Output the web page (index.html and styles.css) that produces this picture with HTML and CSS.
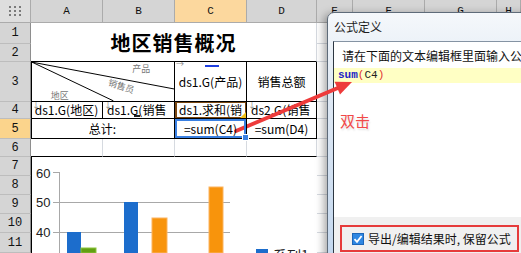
FILE: index.html
```html
<!DOCTYPE html>
<html lang="zh-CN">
<head>
  <meta charset="UTF-8" />
  <title>公式定义</title>
  <meta name="viewport" content="width=device-width, initial-scale=1" />
  <link rel="stylesheet" href="styles.css">
</head>
<body>
<div class="page">
  <div class="sheet">
    <div class="hd corner">
      <svg width="12" height="10" viewBox="0 0 12 10">
        <g fill="#7a7a7a">
          <rect x="0" y="0" width="2" height="2"/><rect x="5" y="0" width="2" height="2"/><rect x="10" y="0" width="2" height="2"/>
          <rect x="0" y="4" width="2" height="2"/><rect x="5" y="4" width="2" height="2"/><rect x="10" y="4" width="2" height="2"/>
          <rect x="0" y="8" width="2" height="2"/><rect x="5" y="8" width="2" height="2"/><rect x="10" y="8" width="2" height="2"/>
        </g>
      </svg>
    </div>
    <div class="hd col">A</div>
    <div class="hd col">B</div>
    <div class="hd col on">C</div>
    <div class="hd col">D</div>
    <div class="hd col">E</div>
    <div class="hd col">F</div>
    <div class="hd col">G</div>
    <div class="hd col">H</div>

    <div class="title">地区销售概况</div>
    <div class="chart">
      <svg width="286" height="96" viewBox="31 157 286 96">
        <line x1="31.5" y1="157" x2="31.5" y2="253" stroke="#000"/>
        <g font-family="Liberation Sans, Arial, sans-serif" font-size="13" fill="#222">
          <text x="36" y="178">60</text>
          <text x="36" y="207">50</text>
          <text x="36" y="237">40</text>
        </g>
        <g stroke="#a8a8a8">
          <line x1="53" y1="172.5" x2="59" y2="172.5"/>
          <line x1="53" y1="202.5" x2="230" y2="202.5"/>
          <line x1="53" y1="232.5" x2="230" y2="232.5"/>
          <line x1="59.5" y1="172" x2="59.5" y2="253"/>
        </g>
        <rect x="67" y="232" width="14" height="21" fill="#1c6dcc"/>
        <rect x="81" y="248" width="15" height="5" fill="#62a012" stroke="#8cc33c" stroke-width="1"/>
        <rect x="124" y="202" width="14" height="51" fill="#1c6dcc"/>
        <rect x="152" y="218" width="15" height="35" fill="#f8940c" stroke="#fbb460" stroke-width="1"/>
        <rect x="209" y="187" width="14" height="66" fill="#f8940c" stroke="#fbb460" stroke-width="1"/>
        <rect x="256" y="249" width="12" height="10" fill="#1c6dcc"/>
        <text x="273" y="261" font-family="Noto Sans CJK SC, sans-serif" font-size="14" fill="#222">系列1</text>
      </svg>
    </div>

    <div class="hd row">1</div>
    <div class="c"></div><div class="c"></div><div class="c"></div><div class="c"></div>
    <div class="hd row">2</div>
    <div class="c"></div><div class="c"></div><div class="c"></div><div class="c"></div>

    <div class="hd row">3</div>
    <div class="t first diag">
      <svg width="143" height="39" viewBox="0 0 143 39">
        <line x1="0" y1="0" x2="143" y2="27" stroke="#000"/>
        <line x1="0" y1="0" x2="82" y2="39" stroke="#000"/>
        <g font-family="Noto Sans CJK SC, sans-serif" font-size="9" fill="#777">
          <text x="101" y="10">产品</text>
          <text x="76" y="27" transform="rotate(18 88 25)">销售员</text>
          <text x="19" y="37">地区</text>
        </g>
      </svg>
    </div>
    <div class="t c3">ds1.G(产品)</div>
    <div class="t">销售总额</div>
    <div class="c"></div><div class="c"></div><div class="c"></div><div class="c"></div>

    <div class="hd row">4</div>
    <div class="t first down">ds1.G(地区)</div>
    <div class="t down left cur">ds1.G(销售</div>
    <div class="t left c4">ds1.求和(销</div>
    <div class="t down left">ds2.G(销售</div>
    <div class="c"></div><div class="c"></div><div class="c"></div><div class="c"></div>

    <div class="hd row on">5</div>
    <div class="t first span2">总计:</div>
    <div class="t c5">=sum(C4)</div>
    <div class="t">=sum(D4)</div>
    <div class="c"></div><div class="c"></div><div class="c"></div><div class="c"></div>

    <div class="hd row">6</div>
    <div class="c edge"></div><div class="c edge"></div><div class="c edge"></div><div class="c edge"></div>
    <div class="c"></div><div class="c"></div><div class="c"></div><div class="c"></div>

    <div class="hd row">7</div>
    <div class="c"></div><div class="c"></div><div class="c"></div><div class="c"></div>
    <div class="hd row">8</div>
    <div class="c"></div><div class="c"></div><div class="c"></div><div class="c"></div>
    <div class="hd row">9</div>
    <div class="c"></div><div class="c"></div><div class="c"></div><div class="c"></div>
    <div class="hd row">10</div>
    <div class="c"></div><div class="c"></div><div class="c"></div><div class="c"></div>
    <div class="hd row">11</div>
    <div class="c"></div><div class="c"></div><div class="c"></div><div class="c"></div>
  </div>

  <div class="dlg">
    <div class="dlg-title">公式定义</div>
    <div class="dlg-body">
      <div class="prompt">请在下面的文本编辑框里面输入公式</div>
      <div class="editor">
        <div class="line"><span class="fn">sum</span><span class="par">(</span>C4<span class="par">)</span></div>
      </div>
      <div class="foot">
        <label class="keep">
          <svg class="chk" width="12" height="12" viewBox="0 0 12 12">
            <rect x="0.5" y="0.5" width="11" height="11" fill="#2f87e2" stroke="#1d66b8"/>
            <path d="M2.5 6.2 L5 8.8 L9.6 3" fill="none" stroke="#fff" stroke-width="1.8"/>
          </svg>
          导出/编辑结果时, 保留公式
        </label>
      </div>
    </div>
  </div>

  <div class="note">双击</div>

  <svg class="arrow" width="521" height="253" viewBox="0 0 521 253">
    <line x1="236" y1="131" x2="339" y2="87.5" stroke="#ee3b3b" stroke-width="4" stroke-linecap="round"/>
    <polygon points="352,82 334.6,81.8 340,94.6" fill="#ee3b3b"/>
  </svg>
</div>
</body>
</html>
```

FILE: styles.css
```css
*{box-sizing:border-box;}
body{margin:0;background:#fff;font-family:"Noto Sans CJK SC","Noto Sans",sans-serif;}
.page{position:relative;width:521px;height:253px;overflow:hidden;background:#fff;}

.sheet{
  display:grid;
  grid-template-columns:31px 72px 72px 72px 70px 36px 72px 72px 24px;
  grid-template-rows:23px 21px 18px 40px 17px 20px 18px 19px 19px 19px 19px 20px;
}
.hd{
  display:flex;align-items:center;justify-content:center;
  background:#d5d5d5;border-right:1px solid #ababab;border-bottom:1px solid #ababab;
  font-family:"Liberation Mono",monospace;font-size:11px;color:#111;
}
.hd.row{font-size:12px;border-bottom-color:#bdbdbd;border-right-color:#8e8e8e;}
.hd.col.on{background:#fcd89e;}
.hd.row.on{background:#fbd48c;}
.corner{background:#dedede;}

.c{border-right:1px solid #d6dae0;border-bottom:1px solid #d6dae0;}
.c.edge{border-bottom-color:#000;}

.title{
  grid-column:2/6;grid-row:2/4;
  display:flex;align-items:center;justify-content:center;
  border-bottom:1px solid #000;border-right:1px solid #d6dae0;
  font-size:20px;font-weight:bold;color:#000;letter-spacing:1px;
}

.t{
  position:relative;display:flex;align-items:center;justify-content:center;
  border-right:1px solid #000;border-bottom:1px solid #000;
  font-size:12px;line-height:14px;white-space:nowrap;overflow:hidden;color:#000;
}
.t.first{box-shadow:inset 1px 0 #000;}
.t.left{justify-content:flex-start;padding-left:4px;}
.t.span2,.t.diag{grid-column:span 2;}
.t.diag{align-items:stretch;justify-content:flex-start;padding-left:1px;}
.t.diag svg{display:block;}

.t.down::before{
  content:"↓";position:absolute;left:1px;top:-4px;
  font-size:8px;color:#808080;
}
.t.cur::after{
  content:"";position:absolute;left:31px;bottom:1px;width:6px;height:2px;background:#222;
}

.c3::before{
  content:"→";position:absolute;left:1px;top:-5px;font-size:8px;color:#888;
}
.c3::after{
  content:"";position:absolute;left:30px;top:3px;width:11px;height:2px;background:#1f3fe0;
  border-right:3px solid #1f3fe0;
}

.c4{box-shadow:inset 0 0 0 1px #7a4712,inset 1px 0 0 1px #7a4712;}
.c4::after{
  content:"";position:absolute;right:0;bottom:0;
  border-left:6px solid transparent;border-bottom:6px solid #f0c21c;
}

.c5{overflow:visible;box-shadow:inset 0 0 0 2px #3a80e2;z-index:1;}
.c5::after{
  content:"";position:absolute;right:-3px;bottom:-3px;width:5px;height:5px;
  background:#3a80e2;border:1px solid #fff;
}

.chart{grid-column:2/6;grid-row:8/13;background:#fff;overflow:hidden;}
.chart svg{display:block;}

.dlg{
  position:absolute;left:327px;top:12px;width:210px;height:250px;
  display:flex;flex-direction:column;padding-left:5px;
  border:1px solid #5e6b79;border-radius:7px 0 0 0;
  background:linear-gradient(#f5f8fb,#e0e9f4 30%,#c3d7ee);
  box-shadow:-3px 2px 8px rgba(0,0,0,.35);
}
.dlg-title{height:28px;line-height:28px;font-size:12px;color:#1e1e1e;padding-left:1px;}
.dlg-body{
  flex:1;display:flex;flex-direction:column;background:#fff;
  border:1px solid #8593a3;border-left-color:#2d3742;border-right:0;
}
.prompt{height:23px;padding:5px 0 0 8px;font-size:12px;line-height:18px;white-space:nowrap;color:#111;}
.editor{flex:1;padding-top:3px;}
.line{
  height:15px;line-height:15px;padding-left:4px;background:#ffffc4;
  font-family:"Liberation Mono",monospace;font-size:11px;color:#222;
}
.fn{color:#2323c8;font-weight:bold;}
.par{color:#e23030;}
.foot{height:43px;background:#f0f0f0;padding:8px 0 0 6px;}
.keep{
  display:flex;align-items:center;gap:4px;width:179px;height:27px;
  border:2px solid #e63b3b;padding-left:10px;
  font-size:12px;color:#111;white-space:nowrap;
}
.chk{display:block;flex:none;}

.note{
  position:absolute;left:340px;top:112px;
  font-size:15px;line-height:17px;color:#f24848;
  text-shadow:1px 2px 2px rgba(0,0,0,.12);
}
.arrow{position:absolute;left:0;top:0;pointer-events:none;}
```
